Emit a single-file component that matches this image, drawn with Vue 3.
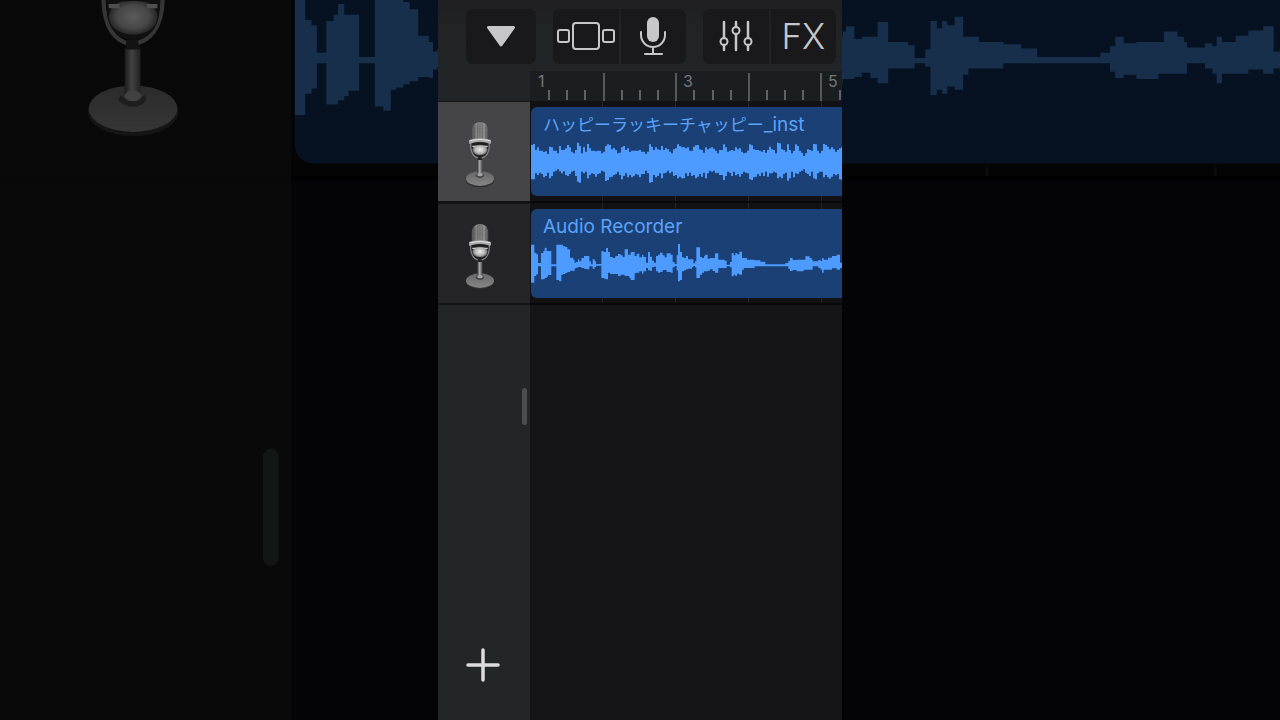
<script setup>
const unit = 3
const originX = 15
const clipTop = 21
const sampleStep = 6
const clipEnd = 948

const instTops = [
  135, 132, 150, 142, 152, 152, 156, 154, 162, 140, 142, 152, 152, 160, 138, 150, 150, 145, 135, 142,
  155, 160, 150, 128, 138, 160, 142, 155, 132, 145, 152, 152, 154, 152, 152, 160, 155, 138, 133, 135,
  148, 144, 150, 160, 158, 142, 138, 150, 145, 156, 152, 152, 152, 152, 150, 155, 155, 162, 155, 133,
  140, 150, 142, 148, 150, 138, 150, 145, 148, 155, 160, 148, 145, 133, 138, 142, 142, 145,
  142, 152, 152, 140, 136, 135, 148, 150, 158, 142, 148, 145, 142, 146, 152, 160, 150, 150, 133, 142,
  155, 152, 150, 152, 142, 148, 145, 155, 160, 158, 152, 133, 136, 148, 150, 150, 152, 155, 150, 158,
  150, 140, 148, 150, 160, 128, 130, 148, 150, 155, 133, 150, 160, 152, 133, 138, 152, 158, 168, 160,
  148, 150, 152, 132, 133, 152, 160, 152, 132, 135, 140, 148, 142, 148, 155, 150, 145, 142,
]
const instBottoms = [
  238, 238, 220, 225, 218, 222, 232, 228, 218, 235, 228, 215, 212, 208, 214, 220, 214, 225, 228, 222,
  215, 212, 228, 245, 248, 215, 220, 215, 235, 225, 220, 222, 230, 222, 220, 212, 215, 243, 240, 232,
  230, 225, 222, 215, 225, 238, 228, 220, 232, 225, 232, 228, 222, 225, 232, 222, 222, 212, 220, 248,
  246, 225, 232, 228, 220, 235, 220, 218, 212, 220, 215, 228, 225, 235, 230, 235, 235, 220,
  228, 218, 228, 225, 235, 230, 222, 230, 218, 235, 220, 212, 215, 212, 220, 218, 225, 225, 240, 228,
  215, 218, 228, 215, 226, 222, 230, 222, 215, 218, 220, 238, 240, 232, 230, 222, 228, 218, 228, 215,
  230, 220, 220, 215, 218, 235, 230, 235, 222, 218, 242, 235, 215, 232, 220, 222, 215, 212, 208, 218,
  222, 228, 215, 235, 238, 220, 215, 215, 232, 225, 232, 236, 230, 222, 226, 222, 238, 240,
]

// [start, top, bottom]: each level holds until the next start.
const voiceLevels = [
  [15, 128, 242], [25, 152, 222], [31, 157, 217], [36, 183, 193], [45, 153, 232], [52, 147, 232],
  [56, 137, 228], [62, 147, 224], [66, 147, 219], [76, 187, 193], [91, 128, 234], [99, 128, 238],
  [106, 128, 218], [111, 133, 216], [118, 135, 213], [124, 142, 210], [132, 167, 206], [142, 173, 207],
  [146, 182, 199], [150, 180, 197], [156, 172, 195], [160, 178, 195], [166, 168, 198], [174, 162, 200],
  [182, 162, 202], [190, 178, 193], [195, 187, 193], [200, 172, 200], [206, 178, 195], [210, 186, 191],
  [226, 148, 228], [234, 150, 230], [240, 138, 232], [246, 150, 212], [252, 165, 216], [260, 168, 216],
  [268, 162, 216], [276, 156, 222], [284, 160, 218], [290, 165, 218], [296, 142, 222], [306, 158, 222],
  [310, 158, 228], [314, 150, 234], [326, 162, 214], [332, 155, 212], [340, 166, 208], [348, 158, 215],
  [352, 165, 208], [360, 182, 198], [366, 150, 205], [372, 164, 206], [378, 176, 195], [384, 182, 194],
  [390, 162, 208], [396, 158, 212], [402, 152, 210], [410, 160, 204], [416, 166, 204], [422, 154, 210],
  [434, 158, 212], [440, 180, 196], [446, 186, 192], [452, 160, 205], [456, 126, 238], [462, 150, 234],
  [468, 166, 208], [474, 168, 205], [480, 162, 202], [486, 172, 200], [498, 172, 196], [502, 184, 192],
  [507, 178, 196], [511, 136, 228], [522, 165, 218], [528, 168, 212], [534, 163, 208], [537, 158, 208],
  [545, 170, 206], [552, 168, 202], [560, 168, 207], [567, 154, 212], [577, 173, 198], [596, 176, 198],
  [602, 188, 193], [612, 180, 196], [617, 153, 223], [623, 160, 218], [628, 153, 222], [633, 157, 215],
  [640, 149, 218], [648, 168, 204], [653, 168, 198], [663, 173, 198], [672, 173, 198], [686, 175, 193],
  [703, 179, 193], [718, 187, 193], [778, 183, 193], [787, 177, 201], [792, 168, 207], [800, 174, 204],
  [812, 173, 208], [833, 173, 203], [838, 163, 203], [851, 168, 203], [857, 173, 203], [860, 178, 193],
  [877, 174, 198], [884, 177, 203], [888, 168, 212], [893, 173, 203], [906, 167, 203], [918, 162, 199],
  [932, 158, 203], [942, 182, 198],
]

const instLevels = instTops.map((top, i) => [originX + i * sampleStep, top, instBottoms[i]])

function wavePath(levels) {
  const upper = []
  const lower = []
  levels.forEach(([x, top, bottom], i) => {
    const end = i + 1 < levels.length ? levels[i + 1][0] : clipEnd
    upper.push(`${x} ${top}`, `${end} ${top}`)
    lower.unshift(`${end} ${bottom}`, `${x} ${bottom}`)
  })
  return `M${upper.concat(lower).join('L')}Z`
}

const waveBox = `${originX} ${clipTop} ${clipEnd - originX} ${89 * unit}`
const voicePath = wavePath(voiceLevels)

const tracks = [
  { id: 'inst', label: 'ハッピーラッキーチャッピー', suffix: '_inst', wave: wavePath(instLevels), selected: true },
  { id: 'rec', label: '', suffix: 'Audio Recorder', wave: voicePath, selected: false },
]

const ticks = Array.from({ length: 40 }, (_, i) => {
  const n = i + 1
  return { x: Math.round(n * 18.15), major: n % 4 === 0 }
})
const bars = [
  { n: 1, x: 8 },
  { n: 3, x: 153 },
  { n: 5, x: 298 },
]
</script>

<template>
  <div class="stage">
    <svg class="defs" aria-hidden="true">
      <defs>
        <linearGradient id="micBody" x1="0" x2="1" y1="0" y2="0">
          <stop offset="0" stop-color="#4b4b4b" />
          <stop offset=".3" stop-color="#8d8d8d" />
          <stop offset=".5" stop-color="#737373" />
          <stop offset=".75" stop-color="#9a9a9a" />
          <stop offset="1" stop-color="#464646" />
        </linearGradient>
        <linearGradient id="micStem" x1="0" x2="1" y1="0" y2="0">
          <stop offset="0" stop-color="#3a3a3a" />
          <stop offset=".45" stop-color="#a8a8a8" />
          <stop offset="1" stop-color="#4a4a4a" />
        </linearGradient>
        <linearGradient id="micBase" x1="0" x2="0" y1="0" y2="1">
          <stop offset="0" stop-color="#686868" />
          <stop offset="1" stop-color="#868686" />
        </linearGradient>
        <radialGradient id="micBulb" cx=".5" cy=".5" r=".55">
          <stop offset="0" stop-color="#ececec" />
          <stop offset=".6" stop-color="#b4b4b4" />
          <stop offset="1" stop-color="#444" />
        </radialGradient>
        <symbol id="studioMic" viewBox="78 68 96 204">
          <ellipse cx="126" cy="244" rx="43" ry="23" fill="#2b2b2c" />
          <ellipse cx="126" cy="241" rx="42" ry="22" fill="url(#micBase)" />
          <path d="M114 228q12 10 23 0l2 5q-13 13-27 0z" fill="#454545" />
          <path d="M118 184h15v44q-7 8-15 0z" fill="url(#micStem)" />
          <ellipse cx="126" cy="229" rx="8" ry="5" fill="#a5a5a5" />
          <path d="M98 136c0 28 11 42 27 44c17-2 29-16 29-44" fill="none" stroke="#858585" stroke-width="4" />
          <path d="M101 128h50v18c0 18-10 30-25 30s-25-12-25-30z" fill="#202020" />
          <ellipse cx="126" cy="154" rx="23" ry="17" fill="url(#micBulb)" />
          <path d="M101 130V98c0-16 10-27 25-27s25 11 25 27v32z" fill="url(#micBody)" />
          <path d="M110 82v39M118 76v46M134 76v46M142 82v39" stroke="#5a5a5a" stroke-width="2" />
          <path d="M102 94q24-8 48 0M102 106q24-8 48 0" fill="none" stroke="#666" stroke-width="1" />
          <path d="M93 125q33-10 66 0v10q-5 5-8 0q-25-8-50 0q-5 5-8 0z" fill="#a8a8a8" />
          <path d="M96 127q30-8 60 0" fill="none" stroke="#e4e4e4" stroke-width="3" />
          <path d="M102 137q24-7 48 0v5q-24-6-48 0z" fill="#1e1e1e" />
          <path d="M103 142h10v4h-10zM139 142h10v4h-10z" fill="#ccc" />
          <path d="M120 176h10l3 9h-15z" fill="#252525" />
        </symbol>
      </defs>
    </svg>

    <svg class="backdrop" viewBox="0 246 404 228" preserveAspectRatio="xMidYMid slice" aria-hidden="true">
      <rect y="240" width="404" height="240" fill="#040406" />
      <rect y="240" width="92" height="63" fill="#09090a" />
      <rect y="303" width="92" height="180" fill="#090909" />
      <rect x="92" y="298" width="312" height="5" fill="#050404" />
      <rect x="92" y="302" width="312" height="1" fill="#000" />
      <path d="M311.500 299v3M383.500 299v3" stroke="#0b0b0c" stroke-width="1" />
      <rect x="93" y="209" width="330" height="89" rx="6" fill="#061221" />
      <svg x="93" y="209" width="311" height="89" :viewBox="waveBox" preserveAspectRatio="none">
        <path :d="voicePath" fill="#172f4b" />
      </svg>
      <g opacity=".36">
        <use href="#studioMic" x="26" y="223" width="32" height="68" />
      </g>
      <rect x="83" y="388" width="5" height="37" rx="2.500" fill="#141615" />
    </svg>

    <main class="phone">
      <header class="toolbar">
        <div class="group">
          <button type="button" aria-label="Menu">
            <svg width="32" height="26" viewBox="0 0 32 26"><path d="M3.500 3.500h25L16 21z" fill="#c7c7c9" stroke="#c7c7c9" stroke-width="3" stroke-linejoin="round" /></svg>
          </button>
        </div>
        <div class="group">
          <button type="button" aria-label="Tracks view">
            <svg width="60" height="32" viewBox="0 0 60 32" fill="none" stroke="#c7c7c9" stroke-width="2">
              <rect x="17" y="2" width="26" height="26" rx="3" />
              <rect x="2" y="9" width="11" height="12" rx="2" />
              <rect x="47" y="9" width="11" height="12" rx="2" />
            </svg>
          </button>
          <button type="button" aria-label="Audio recorder">
            <svg width="28" height="42" viewBox="0 0 28 42" fill="none" stroke="#c7c7c9" stroke-width="2" stroke-linecap="round">
              <rect x="8" y="1" width="12" height="25" rx="6" fill="#c7c7c9" stroke="none" />
              <path d="M2 16v3a12 12 0 0 0 24 0v-3M14 31v7M6 38h17" />
            </svg>
          </button>
        </div>
        <div class="group">
          <button type="button" aria-label="Track controls">
            <svg width="34" height="34" viewBox="0 0 34 34" fill="none" stroke="#c7c7c9" stroke-width="2.500" stroke-linecap="round">
              <path d="M5 2v16M5 25v5M17 2v5M17 14v16M29 2v16M29 25v5" />
              <circle cx="5" cy="21.500" r="3.500" stroke-width="2" />
              <circle cx="17" cy="10.500" r="3.500" stroke-width="2" />
              <circle cx="29" cy="21.500" r="3.500" stroke-width="2" />
            </svg>
          </button>
          <button type="button" class="fx">FX</button>
        </div>
      </header>

      <div class="corner"></div>
      <svg class="ruler" height="30" role="img" aria-label="Ruler">
        <rect
          v-for="t in ticks"
          :key="t.x"
          :x="t.x"
          :y="t.major ? 2 : 19"
          :width="2"
          :height="t.major ? 28 : 10"
          :fill="t.major ? '#55595a' : '#5f6364'"
        />
        <text v-for="b in bars" :key="b.n" :x="b.x" y="16">{{ b.n }}</text>
      </svg>

      <template v-for="t in tracks" :key="t.id">
        <button type="button" class="head" :class="{ selected: t.selected }" :aria-label="t.label + t.suffix">
          <svg width="32" height="68"><use href="#studioMic" width="32" height="68" /></svg>
        </button>
        <section class="lane">
          <article class="clip">
            <h2><span v-if="t.label" lang="ja">{{ t.label }}</span>{{ t.suffix }}</h2>
            <svg class="wave" :viewBox="waveBox" preserveAspectRatio="none" aria-hidden="true">
              <path :d="t.wave" />
            </svg>
          </article>
        </section>
      </template>

      <aside class="side">
        <div class="grip"></div>
        <button type="button" class="add" aria-label="Add track">
          <svg width="34" height="34" viewBox="0 0 34 34"><path d="M17 2v30M2 17h30" stroke="#dcdcdc" stroke-width="3.500" stroke-linecap="round" /></svg>
        </button>
      </aside>
      <div class="empty"></div>
    </main>
  </div>
</template>

<style>
body {
  margin: 0;
  background: #040406;
}
</style>

<style scoped>
.stage {
  display: grid;
  justify-items: center;
  min-height: 100vh;
  overflow: hidden;
  font-family: Inter, "Noto Sans CJK JP", sans-serif;
}
.defs {
  position: absolute;
  width: 0;
  height: 0;
}
.backdrop {
  position: absolute;
  inset: 0;
  width: 100%;
  height: 100%;
}
.phone {
  position: relative;
  display: grid;
  grid-template-columns: 92px 1fr;
  grid-template-rows: 71px 30px 102px 102px 1fr;
  height: 100vh;
  aspect-ratio: 101 / 180;
  overflow: hidden;
  background: #151517;
}
button {
  display: flex;
  align-items: center;
  justify-content: center;
  padding: 0;
  border: 0;
  background: none;
  color: #c7c7c9;
  font-family: inherit;
}
.toolbar {
  grid-column: 1 / -1;
  display: flex;
  gap: 17px;
  padding: 9px 6px 7px 28px;
  background: linear-gradient(#1f1f21, #222325 40%, #212527);
}
.group {
  display: flex;
  gap: 2px;
  flex: 2 1 0;
  overflow: hidden;
  border-radius: 7px;
}
.group:first-child {
  flex: 0 0 70px;
}
.group button {
  flex: 1;
  background: #19191b;
}
.group .fx {
  padding-bottom: 2px;
  font-size: 35px;
  font-weight: 300;
}
.corner {
  background: #212527;
}
.ruler {
  display: block;
  width: 100%;
  background: #1a1e20;
}
.ruler text {
  font-size: 16px;
  fill: #75797a;
}
.head {
  border-top: 1px solid #151617;
  border-bottom: 2px solid #131315;
  background: #252528;
  padding: 6px 8px 0 0;
}
.head.selected {
  background: #454547;
}
.lane {
  padding: 6px 0 7px 1px;
  overflow: hidden;
  background:
    linear-gradient(#08080a, #08080a) 0 100% / 100% 2px no-repeat,
    repeating-linear-gradient(90deg, transparent 0 72px, #26262a 72px 73px),
    #121214;
}
.clip {
  position: relative;
  height: 89px;
  border-radius: 6px 0 0 6px;
  overflow: hidden;
  background: #1a4075;
}
.clip h2 {
  margin: 0;
  padding-left: 12px;
  color: #5ca3fa;
  font-size: 19px;
  font-weight: 400;
  line-height: 36px;
  white-space: nowrap;
}
.clip span {
  font-size: 17px;
}
.wave {
  position: absolute;
  inset: 0;
  width: 100%;
  height: 100%;
  fill: #4d9bff;
}
.side {
  display: flex;
  flex-direction: column;
  justify-content: space-between;
  padding: 83px 3px 38px 0;
  background: #222627;
}
.grip {
  align-self: flex-end;
  width: 5px;
  height: 37px;
  border-radius: 3px;
  background: #4a4e4f;
}
.add {
  align-self: center;
}
.empty {
  background: #151517;
}
</style>
